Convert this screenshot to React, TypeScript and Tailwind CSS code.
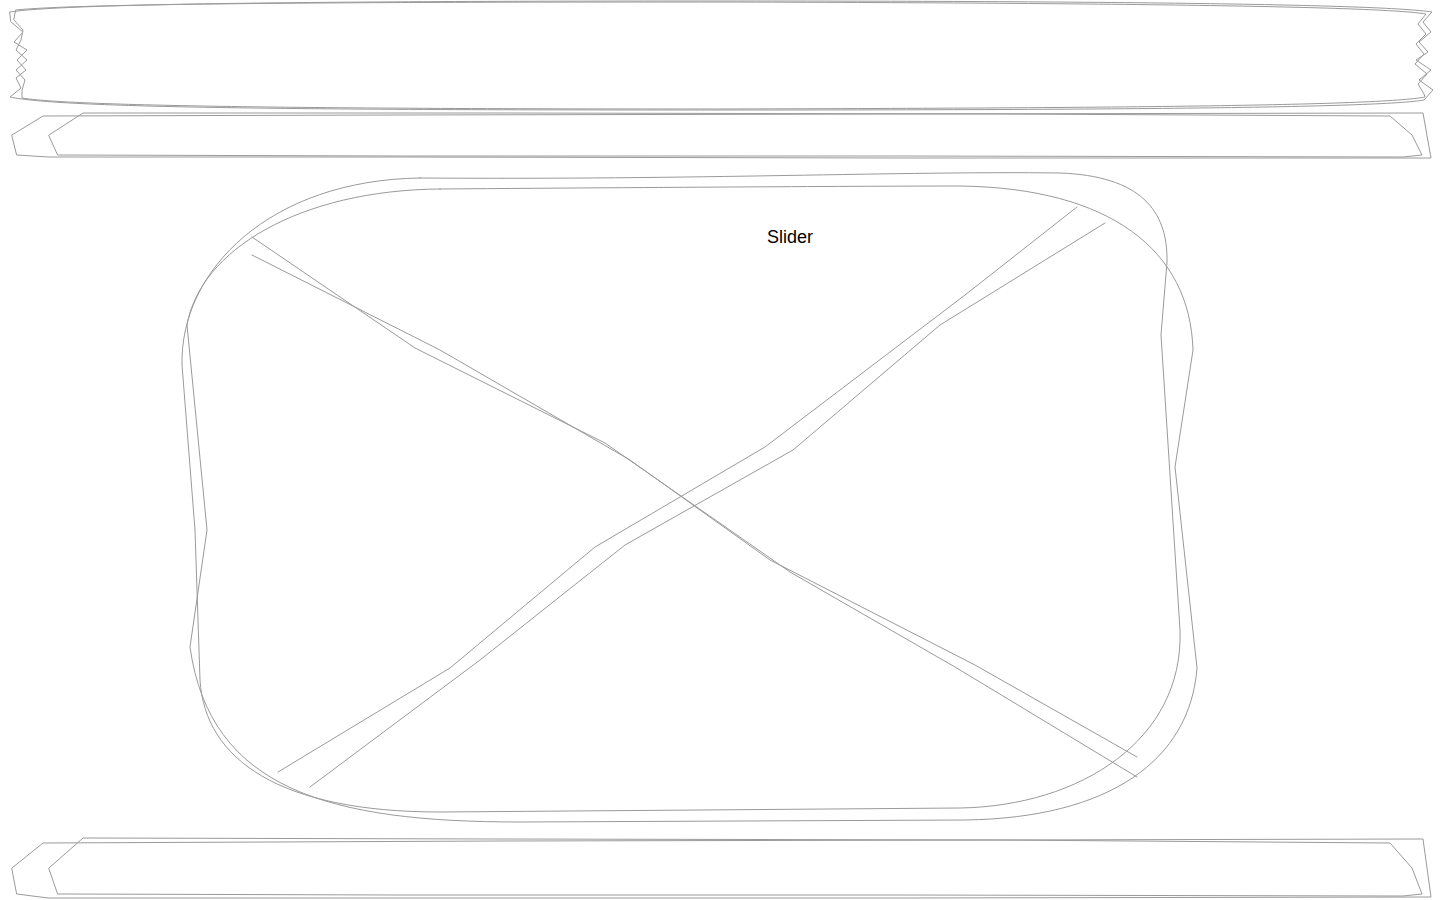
import React from "react";

const stroke = "#9a9a9a";

function Sketch({ vb, children, className }: { vb: string; children: React.ReactNode; className?: string }) {
  return (
    <svg
      viewBox={vb}
      preserveAspectRatio="none"
      className={className ?? "block w-full h-full overflow-visible"}
      fill="none"
      stroke={stroke}
      strokeWidth={1}
      strokeLinejoin="round"
      strokeLinecap="round"
    >
      {children}
    </svg>
  );
}

function Header() {
  return (
    <header className="h-[112px] w-full">
      <Sketch vb="0 0 1440 112">
        <path d="M 10 12 C 60 4, 300 1, 720 1 C 1100 1, 1380 4, 1432 12 L 1423 22 L 1431 32 L 1419 42 L 1428 52 L 1416 60 L 1431 70 L 1419 80 L 1433 90 L 1424 100 C 1380 108, 1100 110, 720 110 C 300 110, 60 108, 10 97 L 21 88 L 16 78 L 26 70 L 17 60 L 27 50 L 14 42 L 23 32 L 11 22 Z" />
        <path d="M 16 10 C 80 3, 400 2, 720 2 C 1100 3, 1380 6, 1426 14 L 1418 24 L 1426 34 L 1416 44 L 1424 54 L 1415 64 L 1427 74 L 1418 84 L 1424 94 L 1425 97 C 1380 106, 1100 108, 720 109 C 300 109, 70 106, 22 98 L 22 90 L 25 80 L 16 70 L 27 60 L 16 50 L 21 40 L 23 30 L 14 20 Z" />
      </Sketch>
    </header>
  );
}

function Nav() {
  return (
    <nav className="h-[48px] w-full">
      <Sketch vb="0 112 1440 48">
        <path d="M 12 135 L 43 116 L 400 115 L 900 114 L 1423 113 L 1431 158 L 900 158 L 400 157 L 48 157 L 17 155 Z" />
        <path d="M 49 135 L 83 113 L 500 113 L 1000 114 L 1390 116 L 1412 135 L 1422 155 L 1403 157 L 900 156 L 400 156 L 58 155 Z" />
      </Sketch>
    </nav>
  );
}

function Main() {
  return (
    <main className="relative h-[676px] w-full">
      <div className="absolute inset-0">
        <Sketch vb="0 160 1440 676">
          <path d="M 420 178 C 700 180, 900 171, 1060 173 C 1140 176, 1168 210, 1167 262 L 1161 335 L 1180 630 C 1184 740, 1080 806, 960 808 L 440 812 C 280 812, 205 760, 200 680 L 195 530 L 182 365 C 180 270, 270 180, 420 178 Z" />
          <path d="M 440 189 C 700 187, 900 186, 960 186 C 1110 188, 1190 250, 1193 350 L 1175 467 L 1197 668 C 1190 760, 1110 818, 965 820 L 520 822 C 330 822, 210 790, 190 647 L 207 530 L 187 325 C 200 250, 300 190, 440 189 Z" />
          <polyline points="252,237 415,348 605,443 790,572 955,667 1137,777" />
          <polyline points="252,255 440,350 630,460 770,560 975,665 1137,757" />
          <polyline points="278,772 450,668 595,547 765,447 965,295 1077,207" />
          <polyline points="310,787 480,660 625,545 793,450 940,325 1105,223" />
        </Sketch>
      </div>
      <div className="relative pt-[65px] pl-[767px]">
        <span className="text-[18px] leading-[24px] text-black" style={{ fontFamily: '"Liberation Sans", Arial, sans-serif' }}>
          Slider
        </span>
      </div>
    </main>
  );
}

function Footer() {
  return (
    <footer className="h-[64px] w-full">
      <Sketch vb="0 836 1440 64">
        <path d="M 12 868 L 43 843 L 500 841 L 1000 840 L 1423 839 L 1431 897 L 900 898 L 400 898 L 48 898 L 17 894 Z" />
        <path d="M 49 868 L 83 838 L 500 839 L 1000 840 L 1390 843 L 1412 868 L 1422 894 L 1403 896 L 900 895 L 400 895 L 58 894 Z" />
      </Sketch>
    </footer>
  );
}

export default function App() {
  return (
    <div className="flex h-[900px] w-[1440px] flex-col overflow-hidden bg-white" style={{ fontFamily: '"Liberation Sans", Arial, sans-serif' }}>
      <Header />
      <Nav />
      <Main />
      <Footer />
    </div>
  );
}
